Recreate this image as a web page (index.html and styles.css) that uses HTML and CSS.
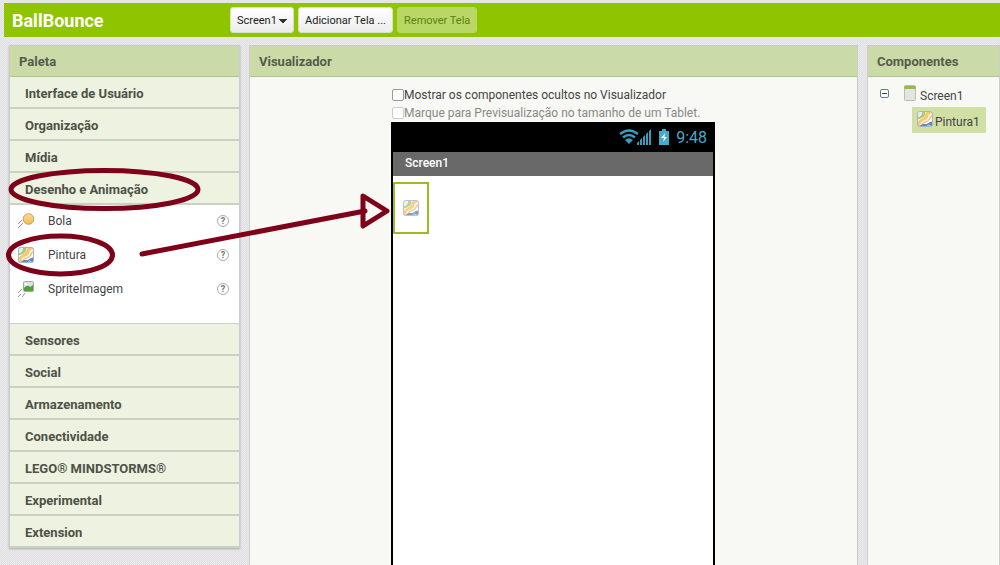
FILE: index.html
```html
<!DOCTYPE html>
<html lang="pt-BR">
<head>
<meta charset="utf-8">
<meta name="viewport" content="width=device-width, initial-scale=1">
<title>BallBounce</title>
<link rel="stylesheet" href="styles.css">
</head>
<body>
<svg class="defs" aria-hidden="true">
  <defs>
    <clipPath id="tile"><rect x="0.5" y="0.5" width="15" height="15" rx="2"/></clipPath>
    <linearGradient id="gold" x1="0" y1="0" x2="0" y2="1"><stop offset="0" stop-color="#fbdc93"/><stop offset="1" stop-color="#f5b94f"/></linearGradient>
    <symbol id="canvas" viewBox="0 0 16 16">
      <g clip-path="url(#tile)">
        <rect width="16" height="16" fill="#fbfbf8"/>
        <path d="M0 0H4Q4 5 0 6Z" fill="#dfe9f4"/>
        <path d="M5 0H8.500C8.500 6 6 7 0 8.500V6.500C4 5.500 5 4 5 0Z" fill="#a9cc7c"/>
        <path d="M16 0V2.500C11 2 12 5 10.500 7.500C9 10 5 9 3.500 13L3 16H0V12C2 7.500 6 8 7.500 5.500C9 3 8.500 0 13 0Z" fill="#f6c872"/>
        <path d="M16 4.500C12.500 4.500 14 8 11 9.800C8 11.500 6 11 5 14" fill="none" stroke="#f2bd6a" stroke-width="1.3"/>
        <path d="M2 16C4 12.500 7 13 9 13C11.500 13 11.500 10.500 16 10.500V16Z" fill="#5f88c6"/>
        <path d="M9 16L11.500 14L14 15.500" fill="none" stroke="#cfdff2"/>
      </g>
      <rect x="0.5" y="0.5" width="15" height="15" rx="2" fill="none" stroke="#a9b5c3"/>
    </symbol>
  </defs>
</svg>

<header class="topbar">
  <h1 class="project">BallBounce</h1>
  <div class="toolbar">
    <select class="btn picker" aria-label="Tela"><option>Screen1</option></select>
    <button class="btn" type="button">Adicionar Tela ...</button>
    <button class="btn" type="button" disabled>Remover Tela</button>
  </div>
</header>

<main class="workspace">
  <section class="panel palette">
    <h2 class="panel-title">Paleta</h2>
    <button class="drawer" type="button">Interface de Usuário</button>
    <button class="drawer" type="button">Organização</button>
    <button class="drawer" type="button">Mídia</button>
    <button class="drawer" type="button">Desenho e Animação</button>
    <ul class="items">
      <li class="item">
        <svg class="icon" viewBox="0 0 16 16" aria-hidden="true"><circle cx="10.5" cy="6" r="5.3" fill="url(#gold)" stroke="#c5a064"/><path d="M0 11L4 7M0 15L5 10" stroke="#8e959e"/></svg>
        <span class="name">Bola</span><button class="help" type="button" aria-label="Ajuda: Bola">?</button>
      </li>
      <li class="item">
        <svg class="icon" aria-hidden="true"><use href="#canvas"/></svg>
        <span class="name">Pintura</span><button class="help" type="button" aria-label="Ajuda: Pintura">?</button>
      </li>
      <li class="item">
        <svg class="icon" viewBox="0 0 16 16" aria-hidden="true"><rect x="5.5" y="0.5" width="10" height="10" rx="1" fill="#d5e7df" stroke="#a0aaa0"/><path d="M6 7Q9 3 12 6L15 4V10H6Z" fill="#55a12d"/><circle cx="8" cy="3" r="1.2" fill="#fff"/><path d="M0 12L4 8M0 16L3 13M4 16L7 12" stroke="#8e959e"/></svg>
        <span class="name">SpriteImagem</span><button class="help" type="button" aria-label="Ajuda: SpriteImagem">?</button>
      </li>
    </ul>
    <button class="drawer" type="button">Sensores</button>
    <button class="drawer" type="button">Social</button>
    <button class="drawer" type="button">Armazenamento</button>
    <button class="drawer" type="button">Conectividade</button>
    <button class="drawer" type="button">LEGO® MINDSTORMS®</button>
    <button class="drawer" type="button">Experimental</button>
    <button class="drawer" type="button">Extension</button>
  </section>

  <section class="panel viewer">
    <h2 class="panel-title">Visualizador</h2>
    <div class="stage">
      <label class="option"><input type="checkbox" class="check">Mostrar os componentes ocultos no Visualizador</label>
      <label class="option off"><input type="checkbox" class="check" disabled>Marque para Previsualização no tamanho de um Tablet.</label>
      <div class="phone">
        <div class="status">
          <svg class="wifi" viewBox="0 0 34 16" aria-hidden="true">
            <g fill="none" stroke="#3a9dbf" stroke-width="2.4"><path d="M1 5Q10 -2 19 5"/><path d="M4 8.500Q10 3.500 16 8.500"/></g>
            <path d="M6 11Q10 7.500 14 11L10 15Z" fill="#3a9dbf"/>
            <path d="M18 16V14L20 12V16ZM21 16V11L23 9V16ZM24 16V8L26 6V16ZM27 16V5L29 3V16ZM30 16V2L32 0V16Z" fill="#3a9dbf"/>
          </svg>
          <svg class="battery" viewBox="0 0 10 16" aria-hidden="true"><path d="M3 0H7V2H10V16H0V2H3Z" fill="#45a9ca"/><path d="M6 4L2 9H5L4 13L8 8H5.500Z" fill="#e8f8fd"/></svg>
          <span class="clock">9:48</span>
        </div>
        <div class="app-title">Screen1</div>
        <div class="app-body"><div class="selected"><svg class="icon" aria-hidden="true"><use href="#canvas"/></svg></div></div>
      </div>
    </div>
  </section>

  <section class="panel components">
    <h2 class="panel-title">Componentes</h2>
    <div class="tree">
      <button class="toggle" type="button" aria-label="Recolher"></button>
      <ul class="nodes">
        <li class="node"><svg class="screen-icon" viewBox="0 0 12 16" aria-hidden="true"><rect x="0.5" y="0.5" width="11" height="15" rx="1" fill="#e3e5df" stroke="#b9bdb3"/><path d="M0.500 1H11.500V4H0.500Z" fill="#9bb849"/></svg><span class="label">Screen1</span></li>
        <li class="node current"><svg class="icon" aria-hidden="true"><use href="#canvas"/></svg><span class="label">Pintura1</span></li>
      </ul>
    </div>
  </section>
</main>

<svg class="marks" viewBox="0 0 400 290" aria-hidden="true">
  <ellipse cx="104.500" cy="189.500" rx="93.500" ry="19"/>
  <ellipse cx="60.500" cy="255" rx="52" ry="19"/>
  <path d="M363 196L387 211L363 226Z"/>
  <path d="M142 254L365 211"/>
</svg>
</body>
</html>
```
FILE: styles.css
```css
* { box-sizing: border-box; }

body {
  margin: 0;
  height: 100vh;
  overflow: hidden;
  display: flex;
  flex-direction: column;
  gap: 8px;
  padding: 3px 0 0 4px;
  font-family: Roboto, sans-serif;
  font-size: 12px;
  color: #444;
  background: repeating-conic-gradient(#e0e0e2 0 25%, #ebebed 0 50%) 0 0 / 2px 2px;
}

button, select, input { font: inherit; color: inherit; margin: 0; }
ul { list-style: none; margin: 0; padding: 0; }
.defs { position: absolute; width: 0; height: 0; }
.icon { width: 16px; height: 16px; flex: none; }

.topbar {
  flex: none;
  display: flex;
  align-items: center;
  height: 34px;
  padding-left: 8px;
  background: #8fc400;
}
.project {
  width: 218px;
  margin: 0;
  padding-top: 2px;
  font-size: 18px;
  line-height: 24px;
  color: #fff;
}
.toolbar { display: flex; gap: 4px; }
.btn {
  height: 26px;
  padding: 0 6px;
  border: 1px solid #d8e2c2;
  border-radius: 3px;
  font-size: 11px;
  color: #222;
  background: linear-gradient(#fff, #ececec);
  white-space: nowrap;
}
.btn:disabled { color: #5c8014; background: #b8d765; border-color: #b8d765; }
.picker {
  appearance: none;
  width: 64px;
  background:
    linear-gradient(45deg, transparent 50%, #333 50%) 48px 11px / 4px 4px no-repeat,
    linear-gradient(-45deg, transparent 50%, #333 50%) 52px 11px / 4px 4px no-repeat,
    linear-gradient(#fff, #ececec);
}

.workspace {
  flex: 1;
  min-height: 0;
  display: grid;
  grid-template-columns: 231px minmax(0, 1fr) 133px;
  column-gap: 9px;
  padding-left: 5px;
}
.panel { border: 1px solid #ccc; border-bottom: 0; background: #f8f9f4; }
.panel-title {
  margin: 0;
  height: 31px;
  padding: 0 9px;
  border-bottom: 1px solid #b1c294;
  font-size: 13px;
  line-height: 32px;
  color: #545b4a;
  background: #cbdba8;
}

.palette {
  align-self: start;
  box-shadow: 0 1px 2px #aaa;
}
.drawer {
  display: block;
  width: 100%;
  height: 32px;
  padding: 2px 15px 0;
  border: 0;
  border-bottom: 2px solid #cbd1c2;
  text-align: left;
  font-size: 13px;
  font-weight: bold;
  color: #4d5147;
  background: #edf2e1;
}
.items { height: 119px; background: #fff; border-bottom: 1px solid #cbd1c2; }
.item { display: flex; align-items: center; height: 34px; padding: 0 10px 2px 8px; }
.name { flex: 1; padding-left: 14px; }
.help {
  width: 12px;
  height: 12px;
  padding: 0;
  border: 1px solid #aaa;
  border-radius: 50%;
  font-size: 9px;
  line-height: 10px;
  font-weight: bold;
  color: #777;
  background: #fff;
}

.viewer { display: flex; flex-direction: column; }
.stage {
  flex: 1;
  display: flex;
  flex-direction: column;
  width: 325px;
  margin: 0 auto;
  padding: 8px 1px 0 0;
}
.option {
  display: flex;
  align-items: center;
  height: 19px;
  white-space: nowrap;
}
.option.off { height: 18px; color: #888; }
.check {
  appearance: none;
  width: 12px;
  height: 12px;
  margin-left: 1px;
  flex: none;
  border: 1px solid #999;
  border-radius: 2px;
  background: #fff;
}
.check:disabled { border-color: #ccc; }
.phone {
  flex: 1;
  border: solid #000;
  border-width: 0 2px;
  background: #fff;
}
.status {
  display: flex;
  justify-content: flex-end;
  align-items: center;
  height: 30px;
  padding-right: 6px;
  color: #45a9ca;
  background: #000;
}
.wifi { width: 34px; height: 16px; }
.battery { width: 10px; height: 16px; margin: 0 7px 0 6px; }
.clock { font-size: 16px; }
.app-title {
  height: 24px;
  padding-left: 12px;
  line-height: 22px;
  font-weight: 500;
  color: #fff;
  background: #696969;
}
.app-body { padding-top: 6px; }
.selected {
  display: grid;
  place-items: center;
  width: 36px;
  height: 52px;
  border: 2px solid #9dbb22;
}
.selected .icon { opacity: .8; }

.tree { display: flex; padding: 8px 0 0 12px; }
.toggle {
  width: 9px;
  height: 9px;
  margin-top: 4px;
  padding: 0;
  border: 1px solid #6476b5;
  border-radius: 2px;
  background: linear-gradient(#2f3f8c, #2f3f8c) center / 5px 1px no-repeat #fff;
}
.nodes { padding-left: 9px; }
.node { display: flex; gap: 3px; height: 22px; padding-left: 5px; }
.label { padding-top: 4px; }
.screen-icon { width: 14px; height: 16px; flex: none; }
.current {
  width: 74px;
  height: 26px;
  margin-left: 14px;
  padding-top: 4px;
  gap: 2px;
  background: #d0dfa4;
}

.marks {
  position: absolute;
  top: 0;
  left: 0;
  width: 400px;
  height: 290px;
  pointer-events: none;
  fill: none;
  stroke: #7e0019;
  stroke-width: 5;
  stroke-linecap: round;
  stroke-linejoin: round;
}
```
